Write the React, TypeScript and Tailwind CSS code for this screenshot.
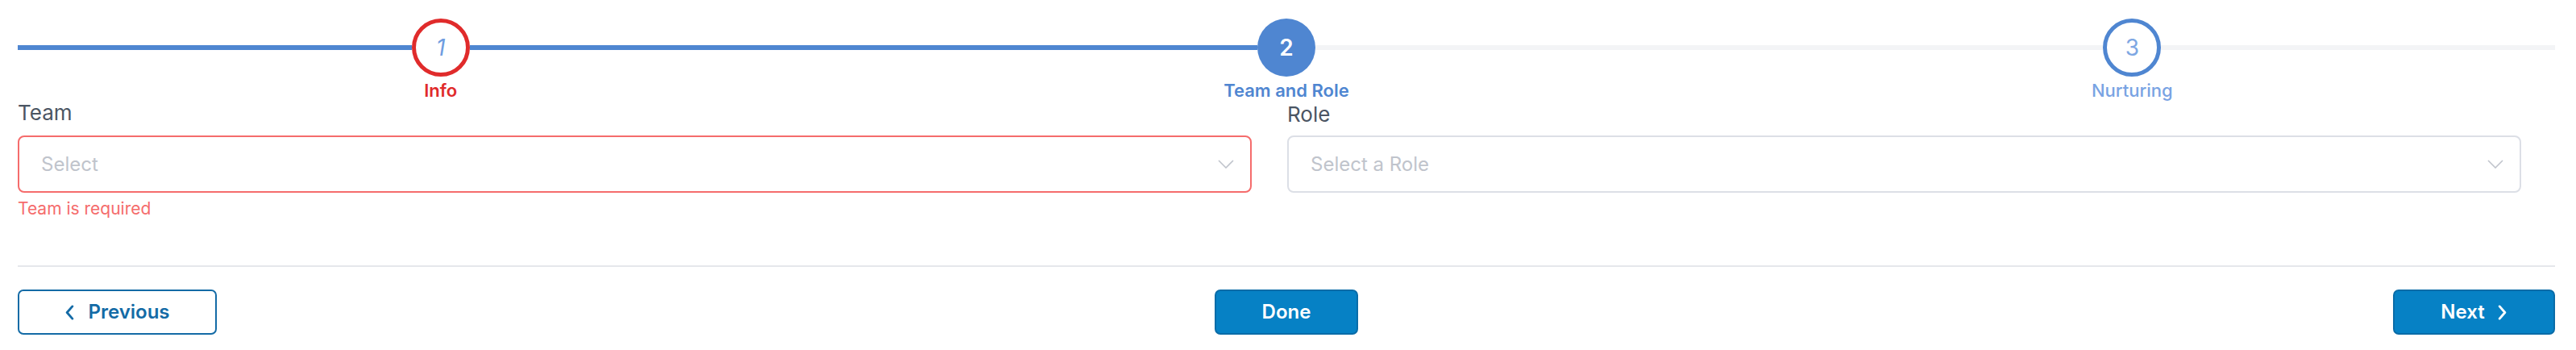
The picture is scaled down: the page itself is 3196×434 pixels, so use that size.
import React from 'react';

type Step = {
  num: number;
  label: string;
  state: 'error' | 'active' | 'todo';
  leftDone: boolean;
  rightDone: boolean;
};

const STEPS: Step[] = [
  { num: 1, label: 'Info', state: 'error', leftDone: true, rightDone: true },
  { num: 2, label: 'Team and Role', state: 'active', leftDone: true, rightDone: false },
  { num: 3, label: 'Nurturing', state: 'todo', leftDone: false, rightDone: false },
];

function Chevron({ dir, className }: { dir: 'left' | 'right' | 'down'; className?: string }) {
  if (dir === 'down') {
    return (
      <svg viewBox="0 0 20 11" className={className} fill="none" stroke="currentColor" strokeWidth={1.6}>
        <path d="M1 1l9 9 9-9" />
      </svg>
    );
  }
  return (
    <svg viewBox="0 0 12 20" className={className} fill="none" stroke="currentColor" strokeWidth={3} strokeLinecap="round" strokeLinejoin="round">
      {dir === 'left' ? <path d="M10 2L3 10l7 8" /> : <path d="M2 2l7 8-7 8" />}
    </svg>
  );
}

function StepCircle({ step }: { step: Step }) {
  if (step.state === 'error') {
    return (
      <div className="flex h-[72px] w-[72px] shrink-0 items-center justify-center rounded-full border-[5px] border-[#e02b2b] bg-white text-[28px] italic text-[#6f9de0]">
        {step.num}
      </div>
    );
  }
  if (step.state === 'active') {
    return (
      <div className="flex h-[72px] w-[72px] shrink-0 items-center justify-center rounded-full bg-[#4f86d1] text-[28px] font-semibold text-white">
        {step.num}
      </div>
    );
  }
  return (
    <div className="flex h-[72px] w-[72px] shrink-0 items-center justify-center rounded-full border-[5px] border-[#4f86d1] bg-white text-[28px] text-[#7ea7e3]">
      {step.num}
    </div>
  );
}

export default function App() {
  return (
    <div className="h-[434px] w-[3196px] bg-white pl-[22px] pr-[26px] pt-[23px] font-['Inter','Liberation_Sans',sans-serif]">
      {/* Stepper */}
      <div className="grid grid-cols-3">
        {STEPS.map((s) => (
          <div key={s.num} className="flex flex-col items-center">
            <div className="flex w-full items-center">
              <div className={`h-[6px] flex-1 ${s.leftDone ? 'bg-[#4f86d1]' : 'bg-[#f3f4f6]'}`} />
              <StepCircle step={s} />
              <div className={`h-[6px] flex-1 ${s.rightDone ? 'bg-[#4f86d1]' : 'bg-[#f3f4f6]'}`} />
            </div>
            <span
              className={`mt-[4px] text-[22px] leading-[26px] ${
                s.state === 'error'
                  ? 'font-semibold text-[#e02b2b]'
                  : s.state === 'active'
                  ? 'font-semibold text-[#4f86d1]'
                  : 'font-medium text-[#79a3e3]'
              }`}
            >
              {s.label}
            </span>
          </div>
        ))}
      </div>

      {/* Form */}
      <div className="flex gap-[44px] pr-[42px]">
        <div className="flex-1">
          <label className="block text-[26px] leading-[30px] text-[#4b5563]">Team</label>
          <div className="mt-[13px] flex h-[71px] items-center justify-between rounded-[8px] border-2 border-[#f56c6c] pl-[27px] pr-[20px]">
            <span className="text-[24px] text-[#c0c4cc]">Select</span>
            <Chevron dir="down" className="h-[11px] w-[20px] text-[#c0c4cc]" />
          </div>
          <p className="mt-[8px] text-[21px] leading-[24px] text-[#f56c6c]">Team is required</p>
        </div>
        <div className="flex-1">
          <label className="block pt-[2px] text-[26px] leading-[30px] text-[#4b5563]">Role</label>
          <div className="mt-[11px] flex h-[71px] items-center justify-between rounded-[8px] border-2 border-[#dcdfe6] pl-[27px] pr-[20px]">
            <span className="text-[24px] text-[#c0c4cc]">Select a Role</span>
            <Chevron dir="down" className="h-[11px] w-[20px] text-[#c0c4cc]" />
          </div>
        </div>
      </div>

      {/* Divider */}
      <div className="mt-[58px] h-[2px] bg-[#e5e7eb]" />

      {/* Footer actions */}
      <div className="mt-[28px] grid grid-cols-3 items-center">
        <button
          type="button"
          className="flex h-[56px] w-[247px] items-center justify-center gap-[17px] justify-self-start rounded-[7px] border-2 border-[#146ba6] bg-white text-[24px] font-semibold text-[#146ba6]"
        >
          <Chevron dir="left" className="h-[19px] w-[12px]" />
          Previous
        </button>
        <button
          type="button"
          className="flex h-[56px] w-[178px] items-center justify-center justify-self-center rounded-[7px] border-2 border-[#0a6ca8] bg-[#0681c5] text-[24px] font-semibold text-white"
        >
          Done
        </button>
        <button
          type="button"
          className="flex h-[56px] w-[201px] items-center justify-center gap-[16px] justify-self-end rounded-[7px] border-2 border-[#0a6ca8] bg-[#0681c5] text-[24px] font-semibold text-white"
        >
          Next
          <Chevron dir="right" className="h-[19px] w-[12px]" />
        </button>
      </div>
    </div>
  );
}
